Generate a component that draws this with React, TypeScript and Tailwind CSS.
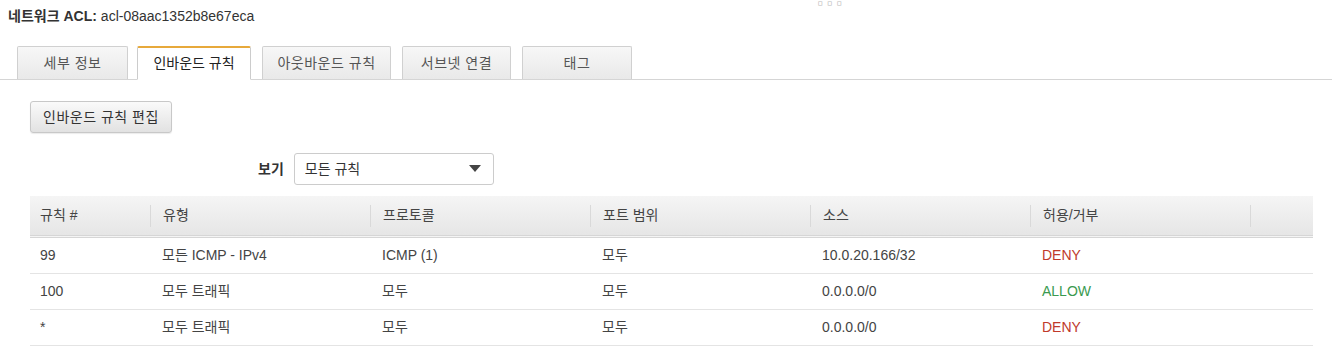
import React from 'react';

const tabs = [
  { label: '세부 정보', cls: 'w-[111px] ml-[17px]' },
  { label: '인바운드 규칙', cls: 'w-[114px] ml-[9px]', active: true },
  { label: '아웃바운드 규칙', cls: 'w-[129px] ml-[11px]' },
  { label: '서브넷 연결', cls: 'w-[109px] ml-[11px]' },
  { label: '태그', cls: 'w-[110px] ml-[11px]' },
];

const cols = [
  { label: '규칙 #', w: 'w-[120px]' },
  { label: '유형', w: 'w-[220px]' },
  { label: '프로토콜', w: 'w-[220px]' },
  { label: '포트 범위', w: 'w-[220px]' },
  { label: '소스', w: 'w-[220px]' },
  { label: '허용/거부', w: 'w-[220px]' },
];

const rules = [
  { num: '99', type: '모든 ICMP - IPv4', proto: 'ICMP (1)', port: '모두', src: '10.0.20.166/32', action: 'DENY' },
  { num: '100', type: '모두 트래픽', proto: '모두', port: '모두', src: '0.0.0.0/0', action: 'ALLOW' },
  { num: '*', type: '모두 트래픽', proto: '모두', port: '모두', src: '0.0.0.0/0', action: 'DENY' },
];

export default function App() {
  return (
    <div className="w-[1332px] h-[357px] bg-white text-[13px] text-[#444] font-['Liberation_Sans','Noto_Sans_CJK_KR',sans-serif] overflow-hidden">
      {/* title */}
      <div className="relative h-[46px] pl-[8px] pt-[6px] text-[14px]">
        <span className="font-bold text-[#333]">네트워크 ACL:</span>
        <span className="ml-[4px] text-[#333]">acl-08aac1352b8e67eca</span>
        <div className="absolute left-[817px] top-0 flex gap-[3px] text-[7px] leading-[8px] text-[#bbb]">
          <span>ㅁ</span>
          <span>ㅁ</span>
          <span>ㅁ</span>
        </div>
      </div>

      {/* tabs */}
      <div className="flex items-end border-b border-[#d5d5d5] h-[34px]">
        {tabs.map((t) =>
          t.active ? (
            <div
              key={t.label}
              className={`${t.cls} h-[34px] -mb-px flex items-center justify-center bg-white border border-[#ccc] border-b-white border-t-2 border-t-[#e7a93b] rounded-t-[2px] text-[14px] text-[#222]`}
            >
              {t.label}
            </div>
          ) : (
            <div
              key={t.label}
              className={`${t.cls} h-[33px] flex items-center justify-center bg-gradient-to-b from-[#f7f7f7] to-[#e9e9e9] border border-[#d0d0d0] border-b-0 rounded-t-[2px] text-[14px] text-[#555] tracking-[0.5px]`}
            >
              {t.label}
            </div>
          )
        )}
      </div>

      {/* actions */}
      <div className="pl-[30px] pt-[21px]">
        <button className="h-[32px] px-[12px] rounded-[3px] border border-[#c8c8c8] bg-gradient-to-b from-[#fafafa] to-[#e2e2e2] text-[14px] tracking-[0.5px] text-[#333] shadow-[0_1px_1px_rgba(0,0,0,0.08)]">
          인바운드 규칙 편집
        </button>
      </div>

      <div className="flex items-center pl-[258px] pt-[20px] gap-[10px]">
        <span className="text-[14px] font-bold text-[#333]">보기</span>
        <div className="w-[200px] h-[32px] border border-[#ccc] rounded-[3px] flex items-center justify-between pl-[10px] pr-[12px] text-[14px] text-[#333]">
          <span>모든 규칙</span>
          <svg width="12" height="8" viewBox="0 0 12 8">
            <path d="M0 0 L12 0 L6 7 Z" fill="#444" />
          </svg>
        </div>
      </div>

      {/* table */}
      <div className="ml-[30px] mt-[11px] w-[1283px]">
        <div className="flex h-[42px] bg-gradient-to-b from-[#f5f5f5] to-[#e6e6e6] border-b-[3px] border-double border-[#d6d6d6] items-center text-[14px] text-[#444]">
          {cols.map((c, i) => (
            <div
              key={c.label}
              className={`${c.w} h-[22px] flex items-center pl-[10px] ${i > 0 ? 'border-l border-[#d9d9d9] pl-[12px]' : ''}`}
            >
              {c.label}
            </div>
          ))}
          <div className="flex-1 h-[22px] border-l border-[#d9d9d9]" />
        </div>
        {rules.map((r, i) => (
          <div key={i} className="flex h-[36px] items-center border-b border-[#e4e4e4] text-[14px] text-[#444]">
            <div className="w-[120px] pl-[10px]">{r.num}</div>
            <div className="w-[220px] pl-[12px]">{r.type}</div>
            <div className="w-[220px] pl-[12px]">{r.proto}</div>
            <div className="w-[220px] pl-[12px]">{r.port}</div>
            <div className="w-[220px] pl-[12px]">{r.src}</div>
            <div className={`w-[220px] pl-[12px] ${r.action === 'DENY' ? 'text-[#c0392b]' : 'text-[#3a9a4f]'}`}>
              {r.action}
            </div>
          </div>
        ))}
      </div>
    </div>
  );
}
